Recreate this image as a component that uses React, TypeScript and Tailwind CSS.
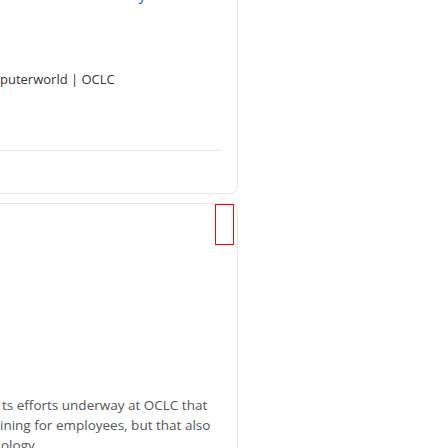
export default function App() {
  return (
    <div className="h-[448px] w-[448px] overflow-hidden bg-white font-['Open_Sans',sans-serif]">
      <div className="-ml-px flex w-[239px] flex-col gap-[9px]">
        <div className="rounded-br-lg border border-t-0 border-[#e6e6e6]">
          <div className="-mt-[16px] pl-[97px] text-[15px] leading-[20px] text-[#0a66c2]">Library</div>
          <div className="mt-[65px] text-[13px] leading-[20px] text-[#333333]">puterworld | OCLC</div>
          <div className="mt-[61px] mr-[16px] h-px bg-[#e6e6e6]" />
          <div className="h-[42px]" />
        </div>

        <div className="rounded-tr-lg border border-b-0 border-[#e6e6e6]">
          <div className="flex justify-end pr-[3px]">
            <div className="h-[41px] w-[19px] border border-[#ff0000]" />
          </div>
          <div className="mt-[150px] text-[13.5px] leading-[20px] text-[#555555]">
            <p className="pl-[2px]">ts efforts underway at OCLC that</p>
            <p>ining for employees, but that also</p>
            <p className="pl-px">ology</p>
          </div>
        </div>
      </div>
    </div>
  )
}
